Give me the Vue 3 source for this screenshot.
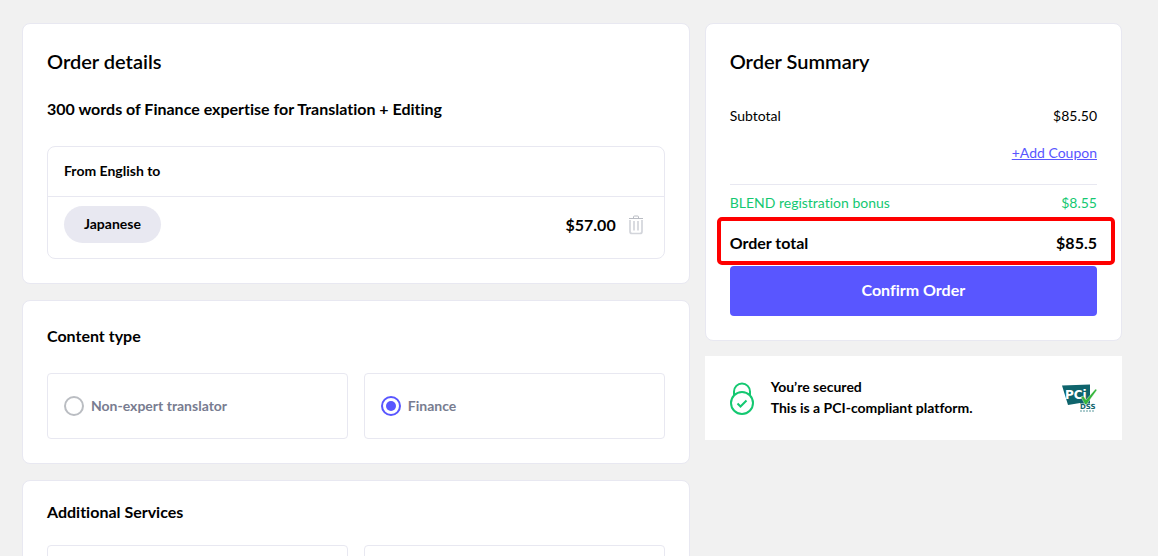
<script setup>
import { ref } from 'vue'

const contentType = ref('finance')
const contentTypes = [
  { value: 'non-expert', label: 'Non-expert translator' },
  { value: 'finance', label: 'Finance' },
]
</script>

<template>
  <main class="page">
    <div class="column">
      <section class="card">
        <h1 class="title">Order details</h1>
        <h2 class="subtitle">300 words of Finance expertise for Translation + Editing</h2>
        <div class="languages">
          <h3 class="languages-head">From English to</h3>
          <div class="language-row">
            <span class="pill">Japanese</span>
            <span class="price">$57.00</span>
            <button class="remove" type="button" aria-label="Remove Japanese">
              <svg width="16" height="20" viewBox="0 0 16 20" fill="none" stroke="#d3d5db">
                <path d="M5.500 3V2Q5.500 1 6.500 1h3Q10.500 1 10.500 2V3" stroke="#b9bcc3" />
                <path d="M1 3.500H15" stroke="#b9bcc3" />
                <path d="M2 5V16.500Q2 18.500 4 18.500H12Q14 18.500 14 16.500V5" stroke-width="1.700" />
                <path d="M6 6V15.500M10 6V15.500" stroke-width="1.700" />
              </svg>
            </button>
          </div>
        </div>
      </section>

      <section class="card">
        <h2 class="heading">Content type</h2>
        <div class="options">
          <label v-for="type in contentTypes" :key="type.value" class="option">
            <input v-model="contentType" type="radio" name="content-type" :value="type.value" />
            <span>{{ type.label }}</span>
          </label>
        </div>
      </section>

      <section class="card services">
        <h2 class="heading">Additional Services</h2>
        <div class="options">
          <div class="option"></div>
          <div class="option"></div>
        </div>
      </section>
    </div>

    <aside class="column">
      <section class="card">
        <h2 class="title">Order Summary</h2>
        <div class="line subtotal"><span>Subtotal</span><span>$85.50</span></div>
        <div class="line coupon"><a href="#">+Add Coupon</a></div>
        <div class="line bonus"><span>BLEND registration bonus</span><span>$8.55</span></div>
        <div class="total"><span>Order total</span><span>$85.5</span></div>
        <button class="confirm" type="button">Confirm Order</button>
      </section>

      <section class="secured">
        <svg class="lock" width="24" height="36" viewBox="0 -2 24 36" fill="none" stroke="#14c871" stroke-width="2">
          <path d="M4 14V10.500a8 8 0 0 1 16 0V14" />
          <circle cx="12" cy="22" r="11" />
          <path d="M7.500 22.500L10.500 25.500L16.500 19.500" />
        </svg>
        <p>You’re secured<br />This is a PCI-compliant platform.</p>
        <svg class="pci" width="36" height="32" viewBox="0 0 36 32" role="img" aria-label="PCI DSS compliant">
          <path d="M1 4.500L29 3.500V22.500H19V22L7 24Z" fill="#0f646c" />
          <text x="4" y="18" class="pci-name">PCi</text>
          <path d="M20 16L22.500 15L25 19L34.500 8L36 9L25.500 23.500H24Z" fill="#35b53b" stroke="#fff" stroke-width="0.400" />
          <text x="19" y="28" class="pci-dss">DSS</text>
          <path d="M19 30H34" stroke="#5b999d" stroke-dasharray="2 1" />
        </svg>
      </section>
    </aside>
  </main>
</template>

<style>
body {
  margin: 0;
  background: #f1f1f1;
}
</style>

<style scoped>
.page {
  box-sizing: border-box;
  height: 100vh;
  overflow: hidden;
  padding: 23px 36px 0 22px;
  display: grid;
  grid-template-columns: 8fr 5fr;
  gap: 15px;
  align-items: start;
  font-family: Lato, "Noto Sans", sans-serif;
  font-size: 14px;
  font-variant-ligatures: none;
  line-height: 20px;
  color: #000;
}
.column {
  display: flex;
  flex-direction: column;
  gap: 16px;
  min-width: 0;
}
aside.column {
  gap: 15px;
}
.card {
  background: #fff;
  border: 1px solid #e8e8f1;
  border-radius: 8px;
  padding: 24px;
}
h1, h2, h3, p {
  margin: 0;
}
.title {
  font-size: 20px;
  font-weight: 600;
  line-height: 26px;
}
.subtitle {
  margin: 24px 0 26px;
  font-size: 16px;
  font-weight: 700;
  line-height: 22px;
}
.languages {
  border: 1px solid #e8e8f1;
  border-radius: 8px;
}
.languages-head {
  padding: 0 16px 2px;
  border-bottom: 1px solid #e8e8f1;
  font-size: 14px;
  font-weight: 700;
  line-height: 47px;
}
.language-row {
  display: flex;
  align-items: center;
  padding: 9px 20px 15px 16px;
}
.pill {
  padding: 0 20px 2px;
  border-radius: 20px;
  background: #e8e8f1;
  font-weight: 700;
  line-height: 35px;
}
.price {
  margin-left: auto;
  font-size: 16px;
  font-weight: 700;
}
.remove {
  display: flex;
  margin-left: 12px;
  padding: 0;
  border: 0;
  background: none;
}
.heading {
  margin-bottom: 26px;
  font-size: 16px;
  font-weight: 700;
  line-height: 22px;
}
.services {
  padding-top: 20px;
}
.services .heading {
  margin-bottom: 22px;
}
.options {
  display: grid;
  grid-template-columns: 1fr 1fr;
  gap: 16px;
}
.option {
  display: flex;
  align-items: center;
  gap: 7px;
  min-height: 64px;
  padding: 0 16px;
  border: 1px solid #e8e8f1;
  border-radius: 4px;
  color: #787c90;
  font-weight: 700;
}
.option input {
  appearance: none;
  width: 20px;
  height: 20px;
  margin: 0;
  border: 2px solid #babdc2;
  border-radius: 50%;
}
.option input:checked {
  border-color: #5956ff;
  padding: 3px;
  background: #5956ff content-box;
}
.line,
.total {
  display: flex;
  justify-content: space-between;
}
.subtotal {
  margin-top: 32px;
}
.coupon {
  justify-content: flex-end;
  padding: 17px 0 21px;
  border-bottom: 1px solid #e8e8f1;
}
.coupon a {
  color: #5956ff;
}
.bonus {
  margin-top: 8px;
  color: #14c871;
}
.total {
  position: relative;
  padding: 18px 0 11px;
  font-size: 16px;
  font-weight: 700;
  line-height: 24px;
}
.total::after {
  content: "";
  position: absolute;
  inset: 4px -18px 1px -13px;
  border: 4px solid #fe0000;
  border-radius: 5px;
  pointer-events: none;
}
.confirm {
  display: block;
  width: 100%;
  height: 50px;
  padding: 0 0 2px;
  border: 0;
  border-radius: 4px;
  background: #5956ff;
  color: #fff;
  font: inherit;
  font-size: 16px;
  font-weight: 700;
}
.secured {
  display: flex;
  align-items: center;
  padding: 20px 25px 22px;
  background: #fff;
  font-weight: 700;
  line-height: 21px;
}
.secured p {
  margin: 0 auto 0 17px;
}
.pci-name {
  font-family: "DejaVu Sans", sans-serif;
  font-size: 12px;
  font-weight: 700;
  fill: #fff;
}
.pci-dss {
  font-family: "DejaVu Sans", sans-serif;
  font-size: 7px;
  font-weight: 700;
  fill: #0f646c;
}
</style>
